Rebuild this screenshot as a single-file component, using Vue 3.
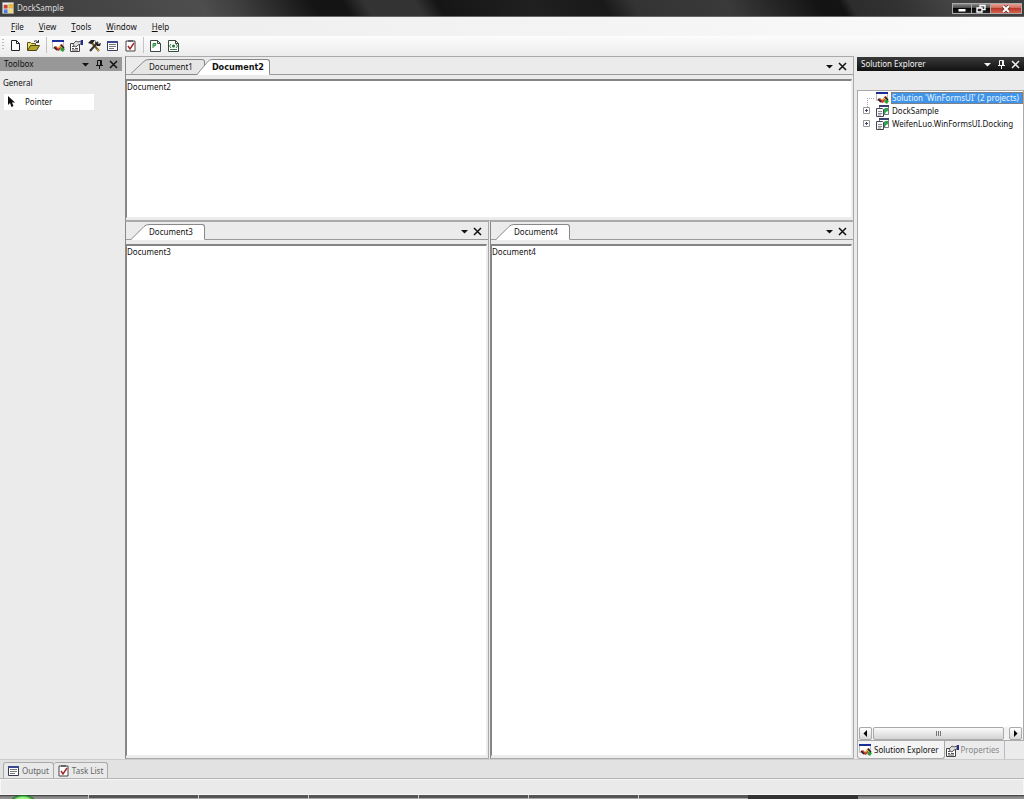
<script setup>
import { ref } from 'vue'

const menus = ['File', 'View', 'Tools', 'Window', 'Help']
const toolGroups = [
  [['new', 'New'], ['open', 'Open']],
  [['solution', 'Solution Explorer'], ['props', 'Properties'], ['tools', 'Toolbox'], ['output', 'Output'], ['task', 'Task List']],
  [['layout', 'Layout by code'], ['layoutxml', 'Layout by XML']]
]
const panes = ref([
  { id: 'top', tabs: ['Document1', 'Document2'], active: 'Document2', focused: true },
  { id: 'left', tabs: ['Document3'], active: 'Document3' },
  { id: 'right', tabs: ['Document4'], active: 'Document4' }
])
const projects = ['DockSample', 'WeifenLuo.WinFormsUI.Docking']
const tasks = [1, 2, 3, 4, 5, 6]
</script>

<template>
  <div class="window">
    <svg class="defs" aria-hidden="true">
      <symbol id="i-new" viewBox="0 0 13 13"><path d="M2.500 1.500h5l3 3v7h-8z" fill="#fff" stroke="#222" /><path d="M7.500 1.500v3h3" fill="none" stroke="#222" /></symbol>
      <symbol id="i-open" viewBox="0 0 13 13"><path d="M.5 11V3.500h3l1 1h4V7" fill="#e8e070" stroke="#5a5412" /><path d="M.5 11.500L3.500 6.500h9l-3 5z" fill="#b5a62c" stroke="#4a4410" /><path d="M7 2.500q2-2 4 .5M11.500 1v2.500H9" fill="none" stroke="#333" /></symbol>
      <symbol id="i-solution" viewBox="0 0 13 13"><path d="M.5 1.500h11v8H.5z" fill="#fff" stroke="#bbb" /><path d="M0 1h12v2H0z" fill="#1c2f96" /><path d="M2 8l2-1 2 2 3-4 2 1-4 6-3-1z" fill="#c8382c" /><path d="M2 8l3 3" stroke="#222" stroke-width="1.500" /><path d="M8 11l2-3 3 2-2 3z" fill="#2e9b35" /><path d="M9 6l3 3" stroke="#222" stroke-width="1.500" /><path d="M6 9l3-2" stroke="#e9c53a" stroke-width="1.500" /></symbol>
      <symbol id="i-props" viewBox="0 0 13 13"><path d="M.5 4.500h9v8h-9z" fill="#fff" stroke="#444" /><path d="M2 7.500h2M5 9.500h3M2 9.500h2M2 11h6" stroke="#555" /><path d="M3 5l3-3 2 1 3-1v3L8 6 6 8 4 7z" fill="#ddd" stroke="#333" stroke-width=".8" /><path d="M11 1h2v5h-2z" fill="#24308e" /></symbol>
      <symbol id="i-tools" viewBox="0 0 13 13"><path d="M3 3l8 9" stroke="#7a5b12" stroke-width="2" /><path d="M10 3l-8 9" stroke="#333" stroke-width="2" /><path d="M0 4l3-3h4L5 4 3 5z" fill="#222" /><path d="M8 1v3l2 1 3-1-1 3-3 0-2-3z" fill="#222" /><path d="M9 10l2 2" stroke="#d8b13c" /></symbol>
      <symbol id="i-output" viewBox="0 0 13 13"><path d="M1.500 2.500h10v9h-10z" fill="#fff" stroke="#333a58" /><path d="M1 2h11v2H1z" fill="#3a4a8c" /><path d="M3 5.500h7M3 7.500h7M3 9.500h5" stroke="#777" /></symbol>
      <symbol id="i-task" viewBox="0 0 13 13"><path d="M2 2h9v10H2z" fill="#fff" stroke="#444" /><path d="M4 1h5v2H4z" fill="#666" /><path d="M4 7l2 3 4-6" fill="none" stroke="#a3282c" stroke-width="1.500" /></symbol>
      <symbol id="i-layout" viewBox="0 0 13 13"><path d="M1.500 1.500h7l3 3v8h-10z" fill="#fff" stroke="#3a4a3d" /><path d="M8.500 1.500v3h3" fill="none" stroke="#3a4a3d" /><path d="M4 9V4.500h3L6 7H4" fill="#6fc27e" stroke="#2f9344" /></symbol>
      <symbol id="i-layoutxml" viewBox="0 0 13 13"><path d="M1.500 1.500h7l3 3v8h-10z" fill="#fff" stroke="#3a4a3d" /><path d="M8.500 1.500v3h3" fill="none" stroke="#3a4a3d" /><path d="M4 5L2.500 7 4 9M9 5l1.500 2L9 9M3 10.500h7" fill="none" stroke="#3a7d48" /><circle cx="6.500" cy="7" r="1.600" fill="#2b7a3b" /></symbol>
      <symbol id="i-project" viewBox="0 0 13 13"><path d="M3.500 1.500h9v9h-9z" fill="#fff" stroke="#778" /><path d="M3 1h10v2H3z" fill="#3a4470" /><path d="M.5 4.500h6l1 1v7h-7z" fill="#f4f8fa" stroke="#445" /><path d="M2 7.500h4M2 9.500h4M2 11h3" stroke="#888" /><path d="M8 10V5l1-1h3v3l-2 1-1 2z" fill="#2fa34f" /></symbol>
      <symbol id="i-down" viewBox="0 0 9 9"><path d="M1 3h7L4.500 6.500z" fill="currentColor" /></symbol>
      <symbol id="i-close" viewBox="0 0 9 9"><path d="M1 1l7 7M8 1L1 8" stroke="currentColor" stroke-width="1.500" /></symbol>
      <symbol id="i-pin" viewBox="0 0 9 9"><path d="M2.500 5V.5h4V5M5.500 .5V5M1 5.500h7M4.500 6v3" fill="none" stroke="currentColor" /></symbol>
    </svg>

    <header class="titlebar">
      <svg class="logo" viewBox="0 0 13 13"><path d="M.5 .5h12v12H.5z" fill="#ddd" stroke="#999" /><path d="M1 1h11v2H1z" fill="#e8eefa" /><path d="M2 3h4v4H2z" fill="#c9402f" /><path d="M7 2h5v5H7z" fill="#e9b93b" /><path d="M2 8h4v4H2z" fill="#4d7fd0" /><path d="M7 8h5v4H7z" fill="#f2d97a" /></svg>
      <h1>DockSample</h1>
      <div class="winbtns">
        <button aria-label="Minimize"><svg viewBox="0 0 18 10"><path d="M5.500 5h7v2.500h-7z" fill="#fff" /></svg></button>
        <button aria-label="Restore"><svg viewBox="0 0 18 10"><path d="M8 1.500h5v4H8z" fill="none" stroke="#fff" stroke-width="1.400" /><path d="M5 4h5v4H5z" fill="#222" stroke="#fff" stroke-width="1.400" /></svg></button>
        <button class="x" aria-label="Close"><svg viewBox="0 0 18 10"><path d="M6 2l6 6M12 2L6 8" stroke="#633" stroke-width="3.500" /><path d="M6 2l6 6M12 2L6 8" stroke="#fff" stroke-width="2" /></svg></button>
      </div>
    </header>

    <nav class="menubar">
      <button v-for="m in menus" :key="m"><u>{{ m[0] }}</u>{{ m.slice(1) }}</button>
    </nav>

    <div class="toolbar" role="toolbar">
      <i class="grip"></i>
      <div v-for="(g, i) in toolGroups" :key="i" class="group">
        <button v-for="[icon, label] in g" :key="icon" :aria-label="label"><svg class="ic"><use :href="'#i-' + icon" /></svg></button>
      </div>
    </div>

    <main class="dock">
      <aside class="toolbox">
        <div class="caption">
          <h2>Toolbox</h2>
          <button aria-label="Menu"><svg><use href="#i-down" /></svg></button>
          <button aria-label="Auto hide"><svg><use href="#i-pin" /></svg></button>
          <button aria-label="Close"><svg><use href="#i-close" /></svg></button>
        </div>
        <p class="section">General</p>
        <button class="pointer">
          <svg viewBox="0 0 8 12"><path d="M1 0v9l2-2 1.500 4 2-1L5 6.500h3z" fill="#111" /></svg>Pointer
        </button>
      </aside>

      <div class="docs">
        <section v-for="p in panes" :key="p.id" class="pane" :class="p.id">
          <div class="strip">
            <div class="tabs" role="tablist">
              <button v-for="t in p.tabs" :key="t" role="tab" class="tab" :class="{ active: t === p.active, bold: p.focused && t === p.active }" @click="p.active = t">
                <svg viewBox="0 0 18 16" preserveAspectRatio="none"><path class="fill" d="M0 16L13 2.500Q15 .5 18 .5V16z" /><path d="M0 15.500L13 2.500Q15 .5 18 .5" fill="none" stroke="#888" /></svg>
                <span>{{ t }}</span>
              </button>
            </div>
            <button class="act" aria-label="Window list"><svg><use href="#i-down" /></svg></button>
            <button class="act" aria-label="Close"><svg><use href="#i-close" /></svg></button>
          </div>
          <div class="content">{{ p.active }}</div>
        </section>
      </div>

      <aside class="explorer">
        <div class="caption dark">
          <h2>Solution Explorer</h2>
          <button aria-label="Menu"><svg><use href="#i-down" /></svg></button>
          <button aria-label="Auto hide"><svg><use href="#i-pin" /></svg></button>
          <button aria-label="Close"><svg><use href="#i-close" /></svg></button>
        </div>
        <div class="treebox">
          <ul class="tree">
            <li><i class="elbow"></i><svg class="ic"><use href="#i-solution" /></svg><span class="sel">Solution 'WinFormsUI' (2 projects)</span></li>
            <li v-for="p in projects" :key="p">
              <button class="plus" :aria-label="'Expand ' + p"><svg viewBox="0 0 7 7"><path d="M.5 .5h6v6h-6z" fill="#fff" stroke="#999" /><path d="M2 3.500h3M3.500 2v3" stroke="#446" /></svg></button>
              <svg class="ic"><use href="#i-project" /></svg><span>{{ p }}</span>
            </li>
          </ul>
          <div class="scroll">
            <button aria-label="Scroll left"><svg viewBox="0 0 7 7"><path d="M5 0v7L1.500 3.500z" /></svg></button>
            <div class="track"><div class="thumb"><i></i><i></i><i></i></div></div>
            <button aria-label="Scroll right"><svg viewBox="0 0 7 7"><path d="M2 0v7l3.500-3.500z" /></svg></button>
          </div>
        </div>
        <div class="foot">
          <button class="on"><svg class="ic"><use href="#i-solution" /></svg>Solution Explorer</button>
          <button><svg class="ic"><use href="#i-props" /></svg>Properties</button>
        </div>
      </aside>
    </main>

    <div class="autohide">
      <button><svg class="ic"><use href="#i-output" /></svg>Output</button>
      <button><svg class="ic"><use href="#i-task" /></svg>Task List</button>
    </div>
    <footer class="status"></footer>
    <div class="taskbar"><span class="start"></span><i v-for="t in tasks" :key="t"></i><b></b></div>
  </div>
</template>

<style>
body { margin: 0; }
</style>

<style scoped>
* { box-sizing: border-box; }
.window { height: 100vh; display: flex; flex-direction: column; background: #ebebeb; color: #111; font: 8px/12px "Noto Sans", "Open Sans", sans-serif; overflow: hidden; }
.defs { position: absolute; width: 0; height: 0; }
button { font: inherit; color: inherit; border: 0; padding: 0; margin: 0; background: none; display: flex; align-items: center; justify-content: center; white-space: nowrap; }
h1, h2, p, ul { margin: 0; padding: 0; font: inherit; list-style: none; }
.ic { width: 13px; height: 13px; flex: none; display: block; }
.titlebar { height: 17px; flex: none; display: flex; align-items: center; padding-left: 2px; gap: 3px; color: #ddd; border-bottom: 1px solid #666;
  background: linear-gradient(60deg, #3c3c3c 0, #454545 10%, #4e4e4e 20%, #3d3d3d 24%, #141414 31%, #141414 34%, #333 36%, #333 41%, #151515 43%, #202020 52%, #191919 59%, #333 62%, #3a3a3a 71%, #131313 80%, #131313 82%, #2c2c2c 83%, #333 88%, #454545 93%, #3c3c3c 100%); }
.logo { width: 12px; height: 12px; }
.winbtns { margin-left: auto; display: flex; align-self: flex-start; padding: 3px 2px 0 0; }
.winbtns button { width: 19px; height: 11px; border: 1px solid #aaa; border-right-width: 0; background: linear-gradient(#888, #444 45%, #080808 50%, #222); }
.winbtns button.x { width: 32px; border-right-width: 1px; background: linear-gradient(#e9a095, #d06858 45%, #b83a2a 50%, #d8604c); }
.winbtns svg { width: 18px; height: 10px; }
.menubar { height: 19px; flex: none; display: flex; align-items: center; gap: 15px; padding-left: 11px; background: linear-gradient(90deg, #ececec, #fafafa); }
.toolbar { height: 20px; flex: none; display: flex; align-items: center; padding-bottom: 2px; background: linear-gradient(#fcfcfc, #ececec); }
.grip { width: 2px; height: 12px; margin: 0 2px; background: repeating-linear-gradient(#bbb 0 1px, transparent 1px 3px); }
.group { display: flex; }
.group + .group { margin-left: 4px; padding-left: 2px; border-left: 1px solid #c4c4c4; }
.group button { width: 18px; height: 16px; }
.dock { flex: 1; min-height: 0; display: grid; grid-template-columns: 122px minmax(0, 1fr) 167px; column-gap: 3px; border-bottom: 1px solid #ccc; }
.toolbox { padding-top: 1px; }
.caption { height: 14px; display: flex; align-items: center; gap: 5px; padding: 0 4px; background: #989898; }
.caption h2 { flex: 1; }
.caption svg, .act svg { width: 9px; height: 9px; display: block; }
.dark { color: #f4f4f4; background: linear-gradient(#3a3a3a, #111); }
.section { padding: 6px 3px 5px; }
.pointer { width: 90px; height: 16px; margin-left: 4px; padding-left: 3px; justify-content: flex-start; gap: 10px; background: #fff; }
.pointer svg { width: 8px; height: 12px; }
.docs { display: grid; grid-template-columns: 1fr 1fr; grid-template-rows: 165px minmax(0, 1fr); column-gap: 1px; }
.pane { display: flex; flex-direction: column; min-width: 0; border: 1px solid #aaa; border-left-color: #888; }
.pane.top { grid-column: 1 / 3; }
.strip { height: 18px; flex: none; display: flex; align-items: center; gap: 4px; padding-right: 6px; border-bottom: 1px solid #999; }
.act { padding-top: 1px; }
.tabs { flex: 1; display: flex; align-self: flex-end; padding-left: 5px; margin-bottom: -1px; }
.tab { height: 16px; align-items: stretch; }
.tab svg { width: 18px; height: 16px; display: block; }
.tab .fill { fill: #e6e6e6; }
.tab span { padding-right: 11px; line-height: 14px; background: #e6e6e6; border: 1px solid #888; border-left: 0; border-radius: 0 3px 0 0; }
.tab.active { position: relative; }
.tab.active .fill { fill: #fff; }
.tab.active span { background: #fff; border-bottom-color: #fff; }
.tab:not(.active) svg { border-bottom: 1px solid #999; }
.tab.bold span { font-family: "DejaVu Sans Condensed", "DejaVu Sans", sans-serif; font-size: 9px; font-weight: bold; padding-right: 5px; }
.tab + .tab { margin-left: -8px; }
.tab + .tab svg { width: 15px; }
.content { flex: 1; margin: 4px 1px 2px 0; border: solid #eee; border-width: 2px 1px 1px; border-top-color: #848484; border-left-color: #848484; background: #fff; }
.explorer { display: flex; flex-direction: column; padding-top: 1px; min-width: 0; }
.treebox { flex: 1; min-height: 0; margin-top: 19px; display: flex; flex-direction: column; justify-content: space-between; background: #fff; border: 1px solid #aaa; }
.tree { padding: 0 0 0 5px; }
.tree li { display: flex; align-items: center; height: 13px; gap: 2px; white-space: nowrap; }
.plus, .elbow { width: 11px; height: 13px; flex: none; }
.plus { justify-content: flex-start; }
.plus svg { width: 7px; height: 7px; }
.elbow { border-left: 1px dotted #aaa; border-top: 1px dotted #aaa; margin: 13px 0 0 4px; width: 7px; }
.tree span { padding-left: 1px; }
.tree .sel { flex: 1; background: #3f94e9; color: #e8f4ff; outline: 1px dotted #b5702a; outline-offset: -1px; }
.scroll { height: 13px; display: flex; gap: 1px; padding: 0 1px; background: #f2f2f2; }
.scroll button { width: 13px; border: 1px solid #aaa; border-radius: 2px; background: linear-gradient(#fff, #d8d8d8); }
.scroll button svg { width: 7px; height: 7px; }
.track { flex: 1; padding-right: 4px; display: flex; }
.thumb { flex: 1; display: flex; justify-content: center; align-items: center; gap: 1px; border: 1px solid #aaa; border-radius: 2px; background: linear-gradient(#fafafa, #d4d4d4); }
.thumb i { width: 1px; height: 5px; background: #777; }
.foot { height: 18px; flex: none; display: flex; }
.foot button { gap: 2px; padding: 0 5px 0 1px; color: #888; border-right: 1px solid #bbb; }
.foot .on { color: #111; background: #f4f4f4; border: 1px solid #aaa; border-top: 0; border-radius: 0 0 3px 3px; }
.autohide { height: 19px; flex: none; display: flex; align-items: flex-start; padding: 2px 0 0 3px; background: #e2e2e2; border-bottom: 1px solid #b4b4b4; }
.autohide button { height: 16px; gap: 2px; padding: 0 4px 0 3px; color: #666; background: #e9e9e9; border: 1px solid #aaa; border-bottom: 0; border-radius: 3px 3px 0 0; }
.autohide button + button { border-left: 0; }
.status { height: 16px; flex: none; background: #eaeaea; border: 1px solid #f6f6f6; }
.taskbar { height: 4px; flex: none; display: flex; background: linear-gradient(#444 1px, #777 1px, #999); overflow: hidden; }
.start { width: 88px; background: radial-gradient(ellipse 12px 5px at 23px 5px, #9df58a 0 50%, #1f7a25 90%, transparent); }
.taskbar i { width: 110px; border-left: 1px solid #ccc; background: linear-gradient(#555 3px, #aaa 3px); }
.taskbar b { width: 110px; background: #333; }
</style>
